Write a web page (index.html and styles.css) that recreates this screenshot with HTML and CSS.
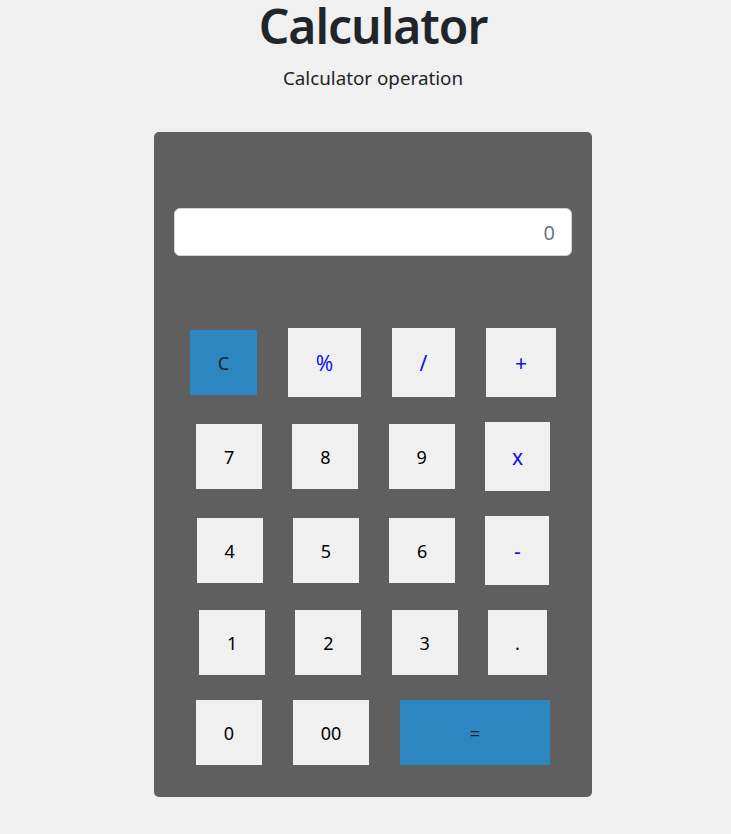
FILE: index.html
```html
<!DOCTYPE html>
<html lang="en">
<head>
<meta charset="utf-8">
<title>Calculator</title>
<link rel="stylesheet" href="styles.css">
</head>
<body>
<div class="page">
  <h1 class="title">Calculator</h1>
  <p class="subtitle">Calculator operation</p>
  <div class="calc">
    <input class="display" type="text" placeholder="0" readonly>
    <div class="keys">
      <div class="row row-wide">
        <button class="key key-clear">C</button>
        <button class="key op op-pct">%</button>
        <button class="key op op-div">/</button>
        <button class="key op op-add">+</button>
      </div>
      <div class="row">
        <button class="key">7</button>
        <button class="key">8</button>
        <button class="key">9</button>
        <button class="key op op-mul">x</button>
      </div>
      <div class="row">
        <button class="key">4</button>
        <button class="key">5</button>
        <button class="key">6</button>
        <button class="key op op-sub">-</button>
      </div>
      <div class="row">
        <button class="key">1</button>
        <button class="key">2</button>
        <button class="key">3</button>
        <button class="key key-dot">.</button>
      </div>
      <div class="row row-wide">
        <button class="key">0</button>
        <button class="key key-dbl">00</button>
        <button class="key key-eq">=</button>
      </div>
    </div>
  </div>
</div>
</body>
</html>
```

FILE: styles.css
```css
html, body {
  margin: 0;
  padding: 0;
  background: #f0f0f0;
  color: #212529;
  font-family: "Noto Sans", "Open Sans", sans-serif;
}

.page {
  padding-left: 15px;
  text-align: center;
}

.title {
  margin: 0;
  font-size: 48px;
  line-height: 52px;
  font-weight: 600;
  letter-spacing: -1px;
  color: #212529;
}

.subtitle {
  margin: 13px 0 0;
  font-size: 18.8px;
  line-height: 27px;
}

.calc {
  width: 398px;
  margin: 40px auto 0;
  padding: 76px 20px 32px;
  background: #5f5f5f;
  border-radius: 5px;
}

.display {
  display: block;
  box-sizing: border-box;
  width: 100%;
  height: 48px;
  padding: 8px 16px;
  border: 1px solid #ced4da;
  border-radius: 6px;
  background: #fff;
  font-family: inherit;
  font-size: 20px;
  text-align: right;
  color: #212529;
  outline: none;
}

.display::placeholder {
  color: #6c757d;
}

.keys {
  margin-top: 72px;
  display: flex;
  flex-direction: column;
  gap: 25px;
}

.row {
  display: flex;
  justify-content: center;
  align-items: center;
  gap: 30.3px;
}

.row-wide {
  gap: 31px;
}

.key {
  width: 66px;
  height: 65px;
  padding: 0;
  border: none;
  border-radius: 0;
  background: #f0f0f0;
  color: #000;
  font-family: inherit;
  font-size: 18px;
}

.op {
  height: 69px;
  color: #1010e8;
  font-size: 21px;
}

.key-clear { width: 67px; background: #2e86c1; color: #10202e; }
.op-pct { width: 73px; }
.op-div { width: 63px; }
.op-add { width: 70px; }
.op-mul { width: 65px; }
.op-sub { width: 64px; }
.key-dot { width: 59px; }
.key-dbl { width: 76px; }
.key-eq { width: 150px; background: #2e86c1; color: #10202e; }
```
